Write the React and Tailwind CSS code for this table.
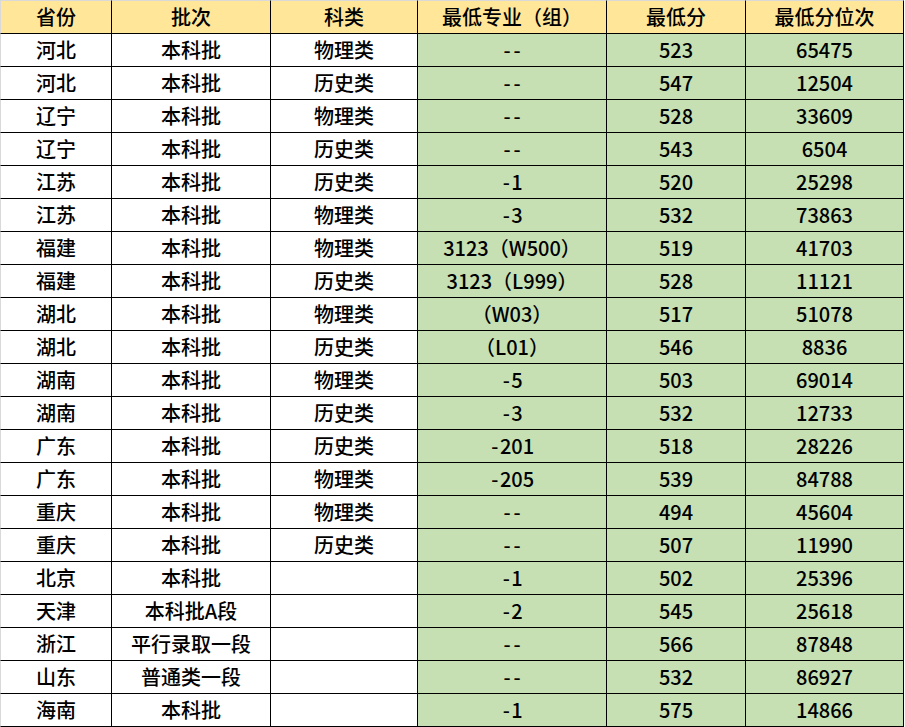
import React from 'react';

const headers = ['省份', '批次', '科类', '最低专业（组）', '最低分', '最低分位次'];

const rows = [
  ['河北', '本科批', '物理类', '--', '523', '65475'],
  ['河北', '本科批', '历史类', '--', '547', '12504'],
  ['辽宁', '本科批', '物理类', '--', '528', '33609'],
  ['辽宁', '本科批', '历史类', '--', '543', '6504'],
  ['江苏', '本科批', '历史类', '-1', '520', '25298'],
  ['江苏', '本科批', '物理类', '-3', '532', '73863'],
  ['福建', '本科批', '物理类', '3123（W500）', '519', '41703'],
  ['福建', '本科批', '历史类', '3123（L999）', '528', '11121'],
  ['湖北', '本科批', '物理类', '（W03）', '517', '51078'],
  ['湖北', '本科批', '历史类', '（L01）', '546', '8836'],
  ['湖南', '本科批', '物理类', '-5', '503', '69014'],
  ['湖南', '本科批', '历史类', '-3', '532', '12733'],
  ['广东', '本科批', '历史类', '-201', '518', '28226'],
  ['广东', '本科批', '物理类', '-205', '539', '84788'],
  ['重庆', '本科批', '物理类', '--', '494', '45604'],
  ['重庆', '本科批', '历史类', '--', '507', '11990'],
  ['北京', '本科批', '', '-1', '502', '25396'],
  ['天津', '本科批A段', '', '-2', '545', '25618'],
  ['浙江', '平行录取一段', '', '--', '566', '87848'],
  ['山东', '普通类一段', '', '--', '532', '86927'],
  ['海南', '本科批', '', '-1', '575', '14866'],
];

const cols = 'grid-cols-[112px_159px_147px_189px_139px_158px]';

// hyphens in the reference are set wider than Noto's, so give each one its own box
const Cell = ({ text }) =>
  text.includes('-')
    ? text.split('').map((ch, k) =>
        ch === '-' ? (
          <span key={k} className="inline-block w-[10px] text-center">-</span>
        ) : (
          <span key={k}>{ch}</span>
        )
      )
    : text;

const App = () => {
  return (
    <div
      className="w-[905px] h-[727px] bg-white text-black text-[20px] font-medium leading-none overflow-hidden"
      style={{ fontFamily: '"Noto Sans CJK SC", "Noto Sans", sans-serif' }}
    >
      <div className={`grid ${cols}`}>
        {headers.map((h, i) => (
          <div
            key={h}
            className={`h-[34px] flex items-center justify-center bg-[#ffe699] border-t border-t-[#d9d9d9] border-b border-b-black border-r border-r-black ${i === 0 ? 'border-l border-l-[#d9d9d9]' : ''}`}
          >
            {h}
          </div>
        ))}
      </div>
      {rows.map((r, ri) => (
        <div key={ri} className={`grid ${cols}`}>
          {r.map((c, i) => (
            <div
              key={i}
              className={`h-[33px] flex items-center justify-center border-b border-r border-black ${i >= 3 ? 'bg-[#c6e0b4]' : 'bg-white'} ${i === 0 ? 'border-l border-l-[#d9d9d9]' : ''}`}
            >
              <Cell text={c} />
            </div>
          ))}
        </div>
      ))}
    </div>
  );
};

export default App;
